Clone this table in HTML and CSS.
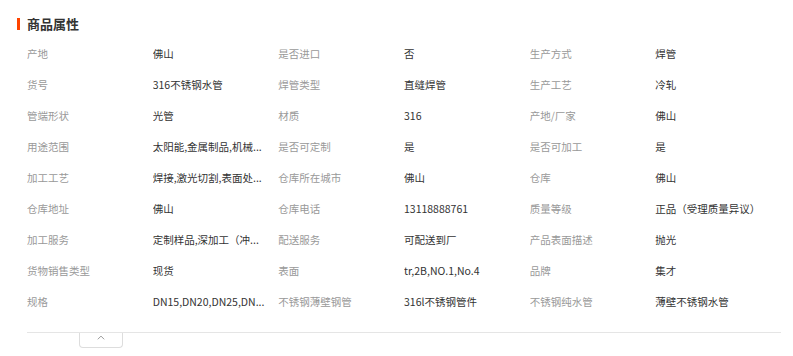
FILE: index.html
```html
<!DOCTYPE html>
<html lang="zh-CN">
<head>
<meta charset="utf-8">
<title>商品属性</title>
<link rel="stylesheet" href="styles.css">
</head>
<body>
<div class="panel">
  <div class="title-row">
    <span class="title-bar"></span>
    <h2 class="title">商品属性</h2>
  </div>
  <div class="attr-grid">
    <div class="label">产地</div><div class="value">佛山</div>
    <div class="label">是否进口</div><div class="value">否</div>
    <div class="label">生产方式</div><div class="value">焊管</div>

    <div class="label">货号</div><div class="value">316不锈钢水管</div>
    <div class="label">焊管类型</div><div class="value">直缝焊管</div>
    <div class="label">生产工艺</div><div class="value">冷轧</div>

    <div class="label">管端形状</div><div class="value">光管</div>
    <div class="label">材质</div><div class="value">316</div>
    <div class="label">产地/厂家</div><div class="value">佛山</div>

    <div class="label">用途范围</div><div class="value" title="太阳能,金属制品,机械设备">太阳能,金属制品,机械...</div>
    <div class="label">是否可定制</div><div class="value">是</div>
    <div class="label">是否可加工</div><div class="value">是</div>

    <div class="label">加工工艺</div><div class="value" title="焊接,激光切割,表面处理">焊接,激光切割,表面处...</div>
    <div class="label">仓库所在城市</div><div class="value">佛山</div>
    <div class="label">仓库</div><div class="value">佛山</div>

    <div class="label">仓库地址</div><div class="value">佛山</div>
    <div class="label">仓库电话</div><div class="value">13118888761</div>
    <div class="label">质量等级</div><div class="value">正品（受理质量异议）</div>

    <div class="label">加工服务</div><div class="value" title="定制样品,深加工（冲压）">定制样品,深加工（冲...</div>
    <div class="label">配送服务</div><div class="value">可配送到厂</div>
    <div class="label">产品表面描述</div><div class="value">抛光</div>

    <div class="label">货物销售类型</div><div class="value">现货</div>
    <div class="label">表面</div><div class="value">tr,2B,NO.1,No.4</div>
    <div class="label">品牌</div><div class="value">集才</div>

    <div class="label">规格</div><div class="value" title="DN15,DN20,DN25,DN32">DN15,DN20,DN25,DN...</div>
    <div class="label">不锈钢薄壁钢管</div><div class="value">316l不锈钢管件</div>
    <div class="label">不锈钢纯水管</div><div class="value">薄壁不锈钢水管</div>
  </div>
  <div class="divider">
    <button class="collapse-btn" type="button" aria-label="收起">
      <svg width="8" height="5" viewBox="0 0 8 5"><path d="M0.8 4.3 L4 1.1 L7.2 4.3" fill="none" stroke="#9a9a9a" stroke-width="1"/></svg>
    </button>
  </div>
</div>
</body>
</html>
```

FILE: styles.css
```css
* { box-sizing: border-box; }
html, body { margin: 0; padding: 0; background: #fff; }
body {
  font-family: "Noto Sans CJK SC", "Liberation Sans", sans-serif;
  color: #333;
}
.panel {
  padding: 17px 12px 0 17px;
}
.title-row {
  display: flex;
  align-items: center;
  height: 14px;
}
.title-bar {
  width: 3px;
  height: 12px;
  background: #ff4400;
  margin-right: 7px;
}
.title {
  margin: 0;
  font-size: 13px;
  line-height: 14px;
  font-weight: bold;
  color: #333;
}
.attr-grid {
  margin: 7px 0 0 10px;
  width: 754px;
  display: grid;
  grid-template-columns: repeat(6, 1fr);
  grid-auto-rows: 31px;
  font-size: 10.5px;
}
.label, .value {
  line-height: 31px;
  white-space: nowrap;
  overflow: hidden;
  text-overflow: ellipsis;
  padding-right: 8px;
}
.label { color: #999; }
.value { color: #333; }
.divider {
  margin: 15px 0 0 10px;
  width: 754px;
  border-top: 1px solid #e5e5e5;
}
.collapse-btn {
  display: flex;
  justify-content: center;
  align-items: flex-start;
  margin: 0 0 0 52px;
  width: 44px;
  height: 15px;
  padding: 2px 0 0;
  background: #fff;
  border: 1px solid #ddd;
  border-top: none;
  border-radius: 0 0 4px 4px;
}
```
